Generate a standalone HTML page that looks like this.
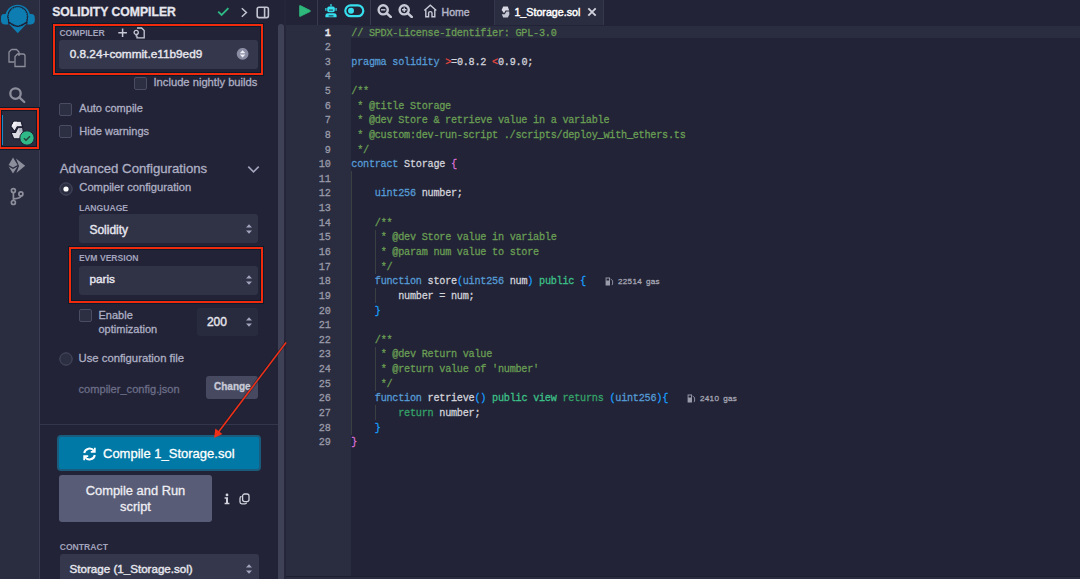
<!DOCTYPE html>
<html><head><meta charset="utf-8">
<style>
*{margin:0;padding:0;box-sizing:border-box}
html,body{width:1080px;height:579px;overflow:hidden;background:#222336;font-family:"Liberation Sans",sans-serif}
.a{position:absolute}
.t{position:absolute;line-height:1;white-space:nowrap;-webkit-text-stroke:0.3px currentColor}
.cl{position:absolute;left:351.3px;font-family:"Liberation Mono",monospace;font-size:10.2px;letter-spacing:-0.25px;line-height:1;white-space:pre;transform:scaleY(1.13);transform-origin:0 8.8px;-webkit-text-stroke:0.25px currentColor}
.ln{position:absolute;left:300px;width:30.5px;text-align:right;font-family:"Liberation Mono",monospace;font-size:10.2px;letter-spacing:-0.25px;line-height:1;white-space:pre;transform:scaleY(1.13);transform-origin:0 8.8px;-webkit-text-stroke:0.25px currentColor}
.ig{position:absolute;width:1px;background:#3a3f42}
.sel{position:absolute;background:#35384c;border-radius:3px}
.cb{position:absolute;width:13px;height:13px;border:1px solid #4a4c63;background:#2c2e42;border-radius:2px}
.red{position:absolute;border:2.4px solid #f02a0c;box-shadow:0 0 0 1px #0c1a2c, inset 0 0 0 1px #0c1a2c}
.lbl{position:absolute;line-height:1;white-space:nowrap;font-weight:bold;font-size:8.6px;color:#a2a3bd}
</style></head><body>

<!-- icon panel -->
<div class="a" style="left:0;top:0;width:38.5px;height:579px;background:#2a2c3f"></div>
<div class="a" style="left:38.5px;top:0;width:1px;height:579px;background:#3b3d54"></div>

<!-- remix logo -->
<svg class="a" style="left:0;top:0" width="38" height="38" viewBox="0 0 579 579">
  <path d="M96 262 A174 174 0 0 1 444 262" fill="none" stroke="#0e7eb2" stroke-width="34"/>
  <path d="M60 215 Q15 215 15 275 V310 Q15 372 70 372 H125 V215 Z" fill="#0e7eb2"/>
  <path d="M480 215 Q530 215 530 275 V310 Q530 372 470 372 H418 V215 Z" fill="#0e7eb2"/>
  <polygon points="135,360 405,360 270,505" fill="#0e7eb2"/>
  <circle cx="270" cy="252" r="160" fill="#1e2033"/>
  <circle cx="270" cy="250" r="138" fill="#0e7eb2" stroke="#0e7eb2" stroke-width="16" stroke-dasharray="14 14"/>
  <path d="M120 340 L270 405 L420 340" fill="none" stroke="#1e2033" stroke-width="14"/>
  <path d="M140 330 L270 385 L400 330 L400 300 L140 300 Z" fill="#0e7eb2"/>
</svg>
<!-- files icon -->
<svg class="a" style="left:8px;top:48px" width="19" height="20" viewBox="0 0 19 20" fill="none" stroke="#8d8e9c" stroke-width="1.3">
  <path d="M3.5 1.5 H8.5 L11 4 V8 M3.5 1.5 L1 4 V14 H6.5"/>
  <path d="M9.5 6 H15 Q17 6 17 8 V18.5 H7 V8.5 L9.5 6 Z"/>
</svg>
<!-- search icon -->
<svg class="a" style="left:8px;top:87px" width="19" height="18" viewBox="0 0 19 18" fill="none" stroke="#8d8e9c" stroke-width="2.3">
  <circle cx="7.5" cy="6.6" r="5.2"/>
  <path d="M11.3 10.4 L16.3 15" stroke-linecap="round"/>
</svg>
<!-- active indicator -->
<div class="a" style="left:0.4px;top:115px;width:2.6px;height:30px;background:#1e88c6"></div>
<!-- solidity icon -->
<svg class="a" style="left:8px;top:116px" width="28" height="30" viewBox="0 0 540 579">
  <g stroke="#16172a" stroke-width="20" stroke-linejoin="round">
  <polygon points="105,100 250,100 282,208 178,208 128,298 55,200" fill="#e4e4ec"/>
  <polygon points="190,228 282,228 290,330 240,438 110,438 65,330 65,318 145,318" fill="#dadae2"/>
  </g>
  <polygon points="200,238 272,238 280,320 230,330" fill="#b4b5c2"/>
  <polygon points="115,110 175,110 125,200 70,200" fill="#f4f4f8"/>
</svg>
<!-- green badge -->
<svg class="a" style="left:19px;top:130px" width="16" height="16" viewBox="0 0 16 16">
  <circle cx="8" cy="8" r="7.2" fill="#30b988" stroke="#1e2133" stroke-width="1"/>
  <path d="M4.9 8.2 L7 10.2 L11 6.2" fill="none" stroke="#24423a" stroke-width="1.4"/>
</svg>
<!-- red box around solidity -->
<div class="red" style="left:-1px;top:108px;width:40.4px;height:41.4px"></div>

<!-- deploy icon -->
<svg class="a" style="left:8px;top:157px" width="18" height="18" viewBox="0 0 18 18">
  <polygon points="5,0.5 9.6,8 5,10.4 0.6,8" fill="#8d8e9c"/>
  <polygon points="0.6,9.4 5,12 9.6,9.4 5,16.6" fill="#8d8e9c"/>
  <polygon points="8,1.5 17.2,8.8 8.4,16 11,9" fill="#8d8e9c"/>
</svg>
<!-- git icon -->
<svg class="a" style="left:9px;top:186px" width="16" height="21" viewBox="0 0 16 21" fill="none" stroke="#8d8e9c" stroke-width="1.7">
  <circle cx="4.4" cy="4.6" r="2"/>
  <circle cx="11.9" cy="7.9" r="2"/>
  <circle cx="4.4" cy="16.5" r="2"/>
  <path d="M4.4 6.6 V14.5 M11.9 9.9 Q11.9 12.4 4.4 12.8"/>
</svg>

<!-- side panel -->
<div class="t" style="left:52.2px;top:5.95px;font-size:12.2px;font-weight:bold;color:#e6e6ee">SOLIDITY COMPILER</div>
<svg class="a" style="left:217px;top:7px" width="13" height="10" viewBox="0 0 13 10">
  <path d="M1.2 4.6 L4.6 8 L11.4 1.2" fill="none" stroke="#2fba85" stroke-width="1.8"/>
</svg>
<svg class="a" style="left:240px;top:7px" width="9" height="11" viewBox="0 0 9 11">
  <path d="M1.8 1.3 L6.4 5.5 L1.8 9.7" fill="none" stroke="#c4c5d3" stroke-width="1.5"/>
</svg>
<svg class="a" style="left:256px;top:5.5px" width="14" height="13" viewBox="0 0 14 13">
  <rect x="1.2" y="1.2" width="11.2" height="10.4" rx="1.8" fill="none" stroke="#c4c5d3" stroke-width="1.6"/>
  <path d="M8.6 1.2 V11.6" stroke="#c4c5d3" stroke-width="1.6"/>
</svg>

<div class="red" style="left:52.8px;top:24.4px;width:210.2px;height:50.8px"></div>
<div class="lbl" style="left:59.4px;top:29.3px">COMPILER</div>
<svg class="a" style="left:117px;top:27px" width="11" height="11" viewBox="0 0 11 11">
  <path d="M5.6 1.4 V10 M1.3 5.7 H9.9" stroke="#c8c9d6" stroke-width="1.5"/>
</svg>
<svg class="a" style="left:133px;top:26.6px" width="13" height="12" viewBox="0 0 13 12" fill="none" stroke="#c8c9d6" stroke-width="1.3">
  <path d="M4 1 H8.6 L11.2 3.6 V10.9 H4 V8.4"/>
  <circle cx="3.2" cy="5.4" r="2.1"/>
  <path d="M3.2 7.5 V9.6"/>
</svg>
<div class="sel" style="left:59px;top:39.5px;width:199.4px;height:29px"></div>
<div class="t" style="left:69.7px;top:48.8px;font-size:11.8px;color:#e6e6ee;-webkit-text-stroke:0.4px #e6e6ee">0.8.24+commit.e11b9ed9</div>
<svg class="a" style="left:235.5px;top:48.3px" width="13" height="13" viewBox="0 0 13 13">
  <circle cx="6.6" cy="5.85" r="5.9" fill="#8a8ca4"/>
  <path d="M3.8 5.3 L6.6 2.2 L9.4 5.3 Z M3.8 6.4 L6.6 9.5 L9.4 6.4 Z" fill="#f0f0f6"/>
</svg>

<div class="cb" style="left:134.4px;top:76.7px"></div>
<div class="t" style="left:153.5px;top:76.9px;font-size:11.2px;color:#aeafc4">Include nightly builds</div>
<div class="cb" style="left:59.1px;top:102.6px"></div>
<div class="t" style="left:79.3px;top:103.3px;font-size:11px;color:#aeafc4">Auto compile</div>
<div class="cb" style="left:59.1px;top:125px"></div>
<div class="t" style="left:79.3px;top:125.8px;font-size:11px;color:#aeafc4">Hide warnings</div>

<div class="t" style="left:59.8px;top:162.2px;font-size:13.2px;color:#aeafc4">Advanced Configurations</div>
<svg class="a" style="left:246.5px;top:164.5px" width="13" height="9" viewBox="0 0 13 9">
  <path d="M1.3 1.6 L6.5 6.8 L11.7 1.6" fill="none" stroke="#a2a3bd" stroke-width="1.6"/>
</svg>
<svg class="a" style="left:58.6px;top:181.9px" width="14" height="14" viewBox="0 0 14 14">
  <circle cx="7" cy="7" r="6.2" fill="#2c2e42" stroke="#4a4c63" stroke-width="1"/>
  <circle cx="7" cy="7" r="2.6" fill="#ffffff"/>
</svg>
<div class="t" style="left:79.3px;top:181.8px;font-size:11.2px;color:#aeafc4">Compiler configuration</div>

<div class="lbl" style="left:78.9px;top:203.6px">LANGUAGE</div>
<div class="sel" style="left:78.9px;top:214px;width:179.6px;height:29px;background:#303246"></div>
<div class="t" style="left:89.4px;top:223.6px;font-size:12px;color:#e6e6ee;-webkit-text-stroke:0.4px #e6e6ee">Solidity</div>
<svg class="a" style="left:245px;top:222.5px" width="8" height="12" viewBox="0 0 8 12">
  <path d="M1 4.6 L4 1.3 L7 4.6 Z M1 7.4 L4 10.7 L7 7.4 Z" fill="#a2a3bd"/>
</svg>

<div class="red" style="left:69px;top:247px;width:194.2px;height:56px"></div>
<div class="lbl" style="left:78.9px;top:254.3px">EVM VERSION</div>
<div class="sel" style="left:78.9px;top:265.5px;width:179.6px;height:29px;background:#303246"></div>
<div class="t" style="left:89.4px;top:274.4px;font-size:11.8px;color:#e6e6ee;-webkit-text-stroke:0.4px #e6e6ee">paris</div>
<svg class="a" style="left:245px;top:274px" width="8" height="12" viewBox="0 0 8 12">
  <path d="M1 4.6 L4 1.3 L7 4.6 Z M1 7.4 L4 10.7 L7 7.4 Z" fill="#a2a3bd"/>
</svg>

<div class="cb" style="left:78.5px;top:309.2px"></div>
<div class="t" style="left:98.5px;top:310px;font-size:11px;color:#aeafc4">Enable</div>
<div class="t" style="left:98.5px;top:324.2px;font-size:11px;color:#aeafc4">optimization</div>
<div class="a" style="left:196.7px;top:307.7px;width:61.5px;height:28px;background:#282a3d;border-radius:3px"></div>
<div class="t" style="left:206.9px;top:316.3px;font-size:12px;color:#e6e6ee;-webkit-text-stroke:0.4px #e6e6ee">200</div>
<svg class="a" style="left:244.7px;top:316.3px" width="8" height="12" viewBox="0 0 8 12">
  <path d="M1 4.6 L4 1.3 L7 4.6 Z M1 7.4 L4 10.7 L7 7.4 Z" fill="#a2a3bd"/>
</svg>

<svg class="a" style="left:58.8px;top:352.1px" width="14" height="14" viewBox="0 0 14 14">
  <circle cx="7" cy="7" r="6.2" fill="#2c2e42" stroke="#4a4c63" stroke-width="1"/>
</svg>
<div class="t" style="left:78.5px;top:352.5px;font-size:11.3px;color:#aeafc4">Use configuration file</div>
<div class="t" style="left:78.5px;top:384.3px;font-size:11.1px;color:#6b6d87">compiler_config.json</div>
<div class="a" style="left:206.3px;top:375.5px;width:52px;height:23px;background:#464960;border-radius:3px"></div>
<div class="t" style="left:214px;top:382.1px;font-size:10px;font-weight:bold;color:#c8c9d6">Change</div>

<div class="a" style="left:39.5px;top:423.6px;width:239px;height:1.6px;background:#34364b"></div>

<div class="a" style="left:56.7px;top:434.7px;width:204.3px;height:36px;background:#0079a6;border:2px solid #1a5c7e;border-radius:4px"></div>
<svg class="a" style="left:82px;top:446.8px" width="15" height="14" viewBox="0 0 15 14" fill="none" stroke="#ffffff" stroke-width="2">
  <path d="M2.2 6 A5.4 5.4 0 0 1 12 4"/>
  <path d="M12.8 8 A5.4 5.4 0 0 1 3 10"/>
  <path d="M12.8 0.8 V4.8 H8.8" stroke-width="1.8"/>
  <path d="M2.2 13.2 V9.2 H6.2" stroke-width="1.8"/>
</svg>
<div class="t" style="left:103px;top:447.3px;font-size:13px;color:#ffffff">Compile 1_Storage.sol</div>

<div class="a" style="left:59px;top:474.5px;width:153px;height:47.7px;background:#595c76;border-radius:3px"></div>
<div class="t" style="left:59px;width:153px;text-align:center;top:485.1px;font-size:12.9px;color:#eeeef4">Compile and Run</div>
<div class="t" style="left:59px;width:153px;text-align:center;top:500.7px;font-size:12.9px;color:#eeeef4">script</div>
<svg class="a" style="left:222.5px;top:493px" width="8" height="12" viewBox="0 0 8 12" fill="#d0d1dc">
  <circle cx="4" cy="1.9" r="1.4"/>
  <path d="M1.6 4.3 H5 V9.8 H6.4 V11.2 H1.6 V9.8 H3 V5.7 H1.6 Z"/>
</svg>
<svg class="a" style="left:239px;top:493px" width="11" height="12" viewBox="0 0 11 12" fill="none" stroke="#d0d1dc" stroke-width="1.3">
  <rect x="3.6" y="1" width="6.4" height="7.6" rx="2"/>
  <path d="M2.6 3.4 Q1 3.6 1 5.4 V9 Q1 10.8 2.8 10.8 H6 Q7.4 10.8 7.6 9.6"/>
</svg>

<div class="lbl" style="left:59.7px;top:543.3px">CONTRACT</div>
<div class="sel" style="left:59.7px;top:554.3px;width:199px;height:30px"></div>
<div class="t" style="left:69.6px;top:563.4px;font-size:11.6px;color:#e6e6ee;-webkit-text-stroke:0.4px #e6e6ee">Storage (1_Storage.sol)</div>
<svg class="a" style="left:244.5px;top:562.5px" width="8" height="12" viewBox="0 0 8 12">
  <path d="M1 4.6 L4 1.3 L7 4.6 Z M1 7.4 L4 10.7 L7 7.4 Z" fill="#a2a3bd"/>
</svg>

<!-- side scrollbar & divider -->
<div class="a" style="left:278.2px;top:24.3px;width:6px;height:560px;background:#3f4157;border-radius:3px 3px 0 0"></div>
<div class="a" style="left:284.2px;top:0;width:2px;height:579px;background:#25263a"></div>

<!-- editor toolbar -->
<div class="a" style="left:316.8px;top:0;width:1.2px;height:24.6px;background:#383a4f"></div>
<div class="a" style="left:370.2px;top:0;width:1.2px;height:24.6px;background:#383a4f"></div>
<svg class="a" style="left:298px;top:3.5px" width="14" height="14" viewBox="0 0 14 14">
  <path d="M2.3 1.6 Q1.6 1.2 1.6 2.1 V11.9 Q1.6 12.8 2.4 12.3 L12.2 7.5 Q12.9 7 12.2 6.5 Z" fill="#2fb87b" stroke="#2fb87b" stroke-width="0.8" stroke-linejoin="round"/>
</svg>
<svg class="a" style="left:324px;top:3px" width="14" height="15" viewBox="0 0 14 15" fill="#36dfee">
  <rect x="6.4" y="1" width="1.2" height="2.5"/>
  <rect x="3.2" y="3.4" width="7.6" height="5.8" rx="1.8"/>
  <rect x="1.3" y="5" width="1.2" height="2.8"/>
  <rect x="11.5" y="5" width="1.2" height="2.8"/>
  <rect x="5" y="6.6" width="4" height="0.9" fill="#222336"/>
  <path d="M1.4 14.2 V12.6 Q1.4 10.3 3.8 10.3 H10.2 Q12.6 10.3 12.6 12.6 V14.2 Z"/>
  <rect x="4.6" y="12.4" width="4.8" height="1" fill="#222336"/>
</svg>
<svg class="a" style="left:343.5px;top:4px" width="21" height="14" viewBox="0 0 21 14">
  <rect x="1.3" y="1.4" width="18" height="10.8" rx="5.4" fill="none" stroke="#36dfee" stroke-width="2.2"/>
  <circle cx="7" cy="6.8" r="3" fill="#36dfee"/>
</svg>
<svg class="a" style="left:377px;top:4px" width="16" height="14" viewBox="0 0 16 14" fill="none" stroke="#c8c9d6">
  <circle cx="6.2" cy="5.8" r="4.6" stroke-width="2.4"/>
  <path d="M4 5.8 H8.4" stroke-width="1.4"/>
  <path d="M9.6 9.2 L13.8 13" stroke-width="2.4" stroke-linecap="round"/>
</svg>
<svg class="a" style="left:398px;top:3.6px" width="16" height="14" viewBox="0 0 16 14" fill="none" stroke="#c8c9d6">
  <circle cx="6.2" cy="5.8" r="4.6" stroke-width="2.4"/>
  <path d="M4 5.8 H8.4 M6.2 3.6 V8" stroke-width="1.4"/>
  <path d="M9.6 9.2 L13.8 13" stroke-width="2.4" stroke-linecap="round"/>
</svg>
<svg class="a" style="left:422.5px;top:3.6px" width="15" height="14" viewBox="0 0 15 14" fill="none" stroke="#c8c9d6" stroke-width="1.4">
  <path d="M1.3 6.6 L7.3 1.2 L13.3 6.6"/>
  <path d="M2.8 5.4 V12.8 H5.6 V9 Q5.6 7.6 7.3 7.6 Q9 7.6 9 9 V12.8 H11.8 V5.4"/>
</svg>
<div class="t" style="left:441.6px;top:7.2px;font-size:10.5px;color:#b4b5c8;-webkit-text-stroke:0.4px #b4b5c8">Home</div>

<div class="a" style="left:494px;top:0;width:110.4px;height:24.6px;background:#2a2c3f;border-left:1px solid #35374c;border-right:1px solid #35374c"></div>
<svg class="a" style="left:500.5px;top:6px" width="9" height="12" viewBox="0 0 9 12">
  <polygon points="2.2,0.6 6.8,0.6 8.2,4.6 4.6,4.6 3,7.2 0.6,4" fill="#d8d9e2"/>
  <polygon points="5.4,5.4 8.2,5.4 8.4,8.4 6.8,11.4 2.2,11.4 0.8,8.3 3.8,8.3" fill="#c4c5d2"/>
</svg>
<div class="t" style="left:514.4px;top:7.1px;font-size:10.7px;color:#ffffff;-webkit-text-stroke:0.45px #ffffff">1_Storage.sol</div>
<svg class="a" style="left:586.5px;top:7px" width="10" height="10" viewBox="0 0 10 10">
  <path d="M1.3 1.3 L8.7 8.7 M8.7 1.3 L1.3 8.7" stroke="#d0d1dc" stroke-width="1.9"/>
</svg>

<!-- gutter -->
<div class="a" style="left:286.2px;top:24.6px;width:65px;height:551px;background:#2a2c3f"></div>
<div class="a" style="left:286px;top:575.6px;width:794px;height:4px;background:#2a2c3f;border-top:1px solid #1d1e2e"></div>
<!-- current line -->
<div class="a" style="left:351.2px;top:25.5px;width:729px;height:12.7px;background:#2a2c3f"></div>

<div class="ig" style="left:351.30px;top:171.30px;height:263.34px"></div>
<div class="ig" style="left:374.78px;top:229.82px;height:43.89px"></div>
<div class="ig" style="left:374.78px;top:288.34px;height:14.63px"></div>
<div class="ig" style="left:374.78px;top:346.86px;height:43.89px"></div>
<div class="ig" style="left:374.78px;top:405.38px;height:14.63px"></div>
<div class="ln" style="top:28.53px;color:#e6e6ec;font-weight:bold">1</div>
<div class="ln" style="top:43.16px;color:#9b9cab;font-weight:normal">2</div>
<div class="ln" style="top:57.79px;color:#9b9cab;font-weight:normal">3</div>
<div class="ln" style="top:72.42px;color:#9b9cab;font-weight:normal">4</div>
<div class="ln" style="top:87.05px;color:#9b9cab;font-weight:normal">5</div>
<div class="ln" style="top:101.68px;color:#9b9cab;font-weight:normal">6</div>
<div class="ln" style="top:116.31px;color:#9b9cab;font-weight:normal">7</div>
<div class="ln" style="top:130.94px;color:#9b9cab;font-weight:normal">8</div>
<div class="ln" style="top:145.57px;color:#9b9cab;font-weight:normal">9</div>
<div class="ln" style="top:160.20px;color:#9b9cab;font-weight:normal">10</div>
<div class="ln" style="top:174.83px;color:#9b9cab;font-weight:normal">11</div>
<div class="ln" style="top:189.46px;color:#9b9cab;font-weight:normal">12</div>
<div class="ln" style="top:204.09px;color:#9b9cab;font-weight:normal">13</div>
<div class="ln" style="top:218.72px;color:#9b9cab;font-weight:normal">14</div>
<div class="ln" style="top:233.35px;color:#9b9cab;font-weight:normal">15</div>
<div class="ln" style="top:247.98px;color:#9b9cab;font-weight:normal">16</div>
<div class="ln" style="top:262.61px;color:#9b9cab;font-weight:normal">17</div>
<div class="ln" style="top:277.24px;color:#9b9cab;font-weight:normal">18</div>
<div class="ln" style="top:291.87px;color:#9b9cab;font-weight:normal">19</div>
<div class="ln" style="top:306.50px;color:#9b9cab;font-weight:normal">20</div>
<div class="ln" style="top:321.13px;color:#9b9cab;font-weight:normal">21</div>
<div class="ln" style="top:335.76px;color:#9b9cab;font-weight:normal">22</div>
<div class="ln" style="top:350.39px;color:#9b9cab;font-weight:normal">23</div>
<div class="ln" style="top:365.02px;color:#9b9cab;font-weight:normal">24</div>
<div class="ln" style="top:379.65px;color:#9b9cab;font-weight:normal">25</div>
<div class="ln" style="top:394.28px;color:#9b9cab;font-weight:normal">26</div>
<div class="ln" style="top:408.91px;color:#9b9cab;font-weight:normal">27</div>
<div class="ln" style="top:423.54px;color:#9b9cab;font-weight:normal">28</div>
<div class="ln" style="top:438.17px;color:#9b9cab;font-weight:normal">29</div>
<div class="cl" style="top:28.53px"><span style="color:#6a9f55">// SPDX-License-Identifier: GPL-3.0</span></div>
<div class="cl" style="top:43.16px"></div>
<div class="cl" style="top:57.79px"><span style="color:#569cd6">pragma</span><span style="color:#d4d4dc"> </span><span style="color:#569cd6">solidity</span><span style="color:#d4d4dc"> </span><span style="color:#e2473f">&gt;</span><span style="color:#d4d4dc">=0.8.2 </span><span style="color:#e2473f">&lt;</span><span style="color:#d4d4dc">0.9.0;</span></div>
<div class="cl" style="top:72.42px"></div>
<div class="cl" style="top:87.05px"><span style="color:#6a9f55">/**</span></div>
<div class="cl" style="top:101.68px"><span style="color:#6a9f55"> * @title Storage</span></div>
<div class="cl" style="top:116.31px"><span style="color:#6a9f55"> * @dev Store &amp; retrieve value in a variable</span></div>
<div class="cl" style="top:130.94px"><span style="color:#6a9f55"> * @custom:dev-run-script ./scripts/deploy_with_ethers.ts</span></div>
<div class="cl" style="top:145.57px"><span style="color:#6a9f55"> */</span></div>
<div class="cl" style="top:160.20px"><span style="color:#569cd6">contract</span><span style="color:#d4d4dc"> Storage </span><span style="color:#da70d6">{</span></div>
<div class="cl" style="top:174.83px"></div>
<div class="cl" style="top:189.46px"><span style="color:#d4d4dc">    </span><span style="color:#569cd6">uint256</span><span style="color:#d4d4dc"> number;</span></div>
<div class="cl" style="top:204.09px"></div>
<div class="cl" style="top:218.72px"><span style="color:#d4d4dc">    </span><span style="color:#6a9f55">/**</span></div>
<div class="cl" style="top:233.35px"><span style="color:#d4d4dc">    </span><span style="color:#6a9f55"> * @dev Store value in variable</span></div>
<div class="cl" style="top:247.98px"><span style="color:#d4d4dc">    </span><span style="color:#6a9f55"> * @param num value to store</span></div>
<div class="cl" style="top:262.61px"><span style="color:#d4d4dc">    </span><span style="color:#6a9f55"> */</span></div>
<div class="cl" style="top:277.24px"><span style="color:#d4d4dc">    </span><span style="color:#569cd6">function</span><span style="color:#d4d4dc"> store</span><span style="color:#179fff">(</span><span style="color:#569cd6">uint256</span><span style="color:#d4d4dc"> num</span><span style="color:#179fff">)</span><span style="color:#d4d4dc"> </span><span style="color:#3dc189">public</span><span style="color:#d4d4dc"> </span><span style="color:#179fff">{</span></div>
<div class="cl" style="top:291.87px"><span style="color:#d4d4dc">        </span><span style="color:#d4d4dc">number = num;</span></div>
<div class="cl" style="top:306.50px"><span style="color:#d4d4dc">    </span><span style="color:#179fff">}</span></div>
<div class="cl" style="top:321.13px"></div>
<div class="cl" style="top:335.76px"><span style="color:#d4d4dc">    </span><span style="color:#6a9f55">/**</span></div>
<div class="cl" style="top:350.39px"><span style="color:#d4d4dc">    </span><span style="color:#6a9f55"> * @dev Return value</span></div>
<div class="cl" style="top:365.02px"><span style="color:#d4d4dc">    </span><span style="color:#6a9f55"> * @return value of &#x27;number&#x27;</span></div>
<div class="cl" style="top:379.65px"><span style="color:#d4d4dc">    </span><span style="color:#6a9f55"> */</span></div>
<div class="cl" style="top:394.28px"><span style="color:#d4d4dc">    </span><span style="color:#569cd6">function</span><span style="color:#d4d4dc"> retrieve</span><span style="color:#179fff">()</span><span style="color:#d4d4dc"> </span><span style="color:#3dc189">public</span><span style="color:#d4d4dc"> </span><span style="color:#3dc189">view</span><span style="color:#d4d4dc"> </span><span style="color:#35a46a">returns</span><span style="color:#d4d4dc"> </span><span style="color:#179fff">(</span><span style="color:#569cd6">uint256</span><span style="color:#179fff">)</span><span style="color:#179fff">{</span></div>
<div class="cl" style="top:408.91px"><span style="color:#d4d4dc">        </span><span style="color:#35a46a">return</span><span style="color:#d4d4dc"> number;</span></div>
<div class="cl" style="top:423.54px"><span style="color:#d4d4dc">    </span><span style="color:#179fff">}</span></div>
<div class="cl" style="top:438.17px"><span style="color:#da70d6">}</span></div>

<!-- gas -->
<svg class="a" style="left:605px;top:277px" width="9" height="9" viewBox="0 0 9 9" fill="#9a9bab">
  <path d="M0.6 0.6 H5 V8.6 H0.6 Z M1.5 1.6 V3.6 H4.1 V1.6 Z" fill-rule="evenodd"/>
  <path d="M5.6 2 L7.6 3.6 V7 Q7.6 7.8 6.8 7.8" fill="none" stroke="#9a9bab" stroke-width="0.9"/>
</svg>
<div class="t" style="left:618px;top:277.6px;font-size:8.1px;letter-spacing:0.3px;word-spacing:1.4px;color:#a4a5b3">22514 gas</div>
<svg class="a" style="left:687px;top:394.2px" width="9" height="9" viewBox="0 0 9 9" fill="#9a9bab">
  <path d="M0.6 0.6 H5 V8.6 H0.6 Z M1.5 1.6 V3.6 H4.1 V1.6 Z" fill-rule="evenodd"/>
  <path d="M5.6 2 L7.6 3.6 V7 Q7.6 7.8 6.8 7.8" fill="none" stroke="#9a9bab" stroke-width="0.9"/>
</svg>
<div class="t" style="left:700px;top:394.6px;font-size:8.1px;letter-spacing:0.3px;word-spacing:1.4px;color:#a4a5b3">2410 gas</div>

<!-- red arrow -->
<svg class="a" style="left:0;top:0" width="1080" height="579" viewBox="0 0 1080 579">
  <path d="M286.1 342.4 L218 432.8" stroke="#0c1a2c" stroke-width="3" fill="none" opacity="0.5"/>
  <path d="M286.1 342.4 L218 432.8" stroke="#ee3019" stroke-width="1.6" fill="none"/>
  <polygon points="214.1,437.9 215.3,428.6 222.4,434" fill="#ee3019"/>
</svg>

</body></html>
